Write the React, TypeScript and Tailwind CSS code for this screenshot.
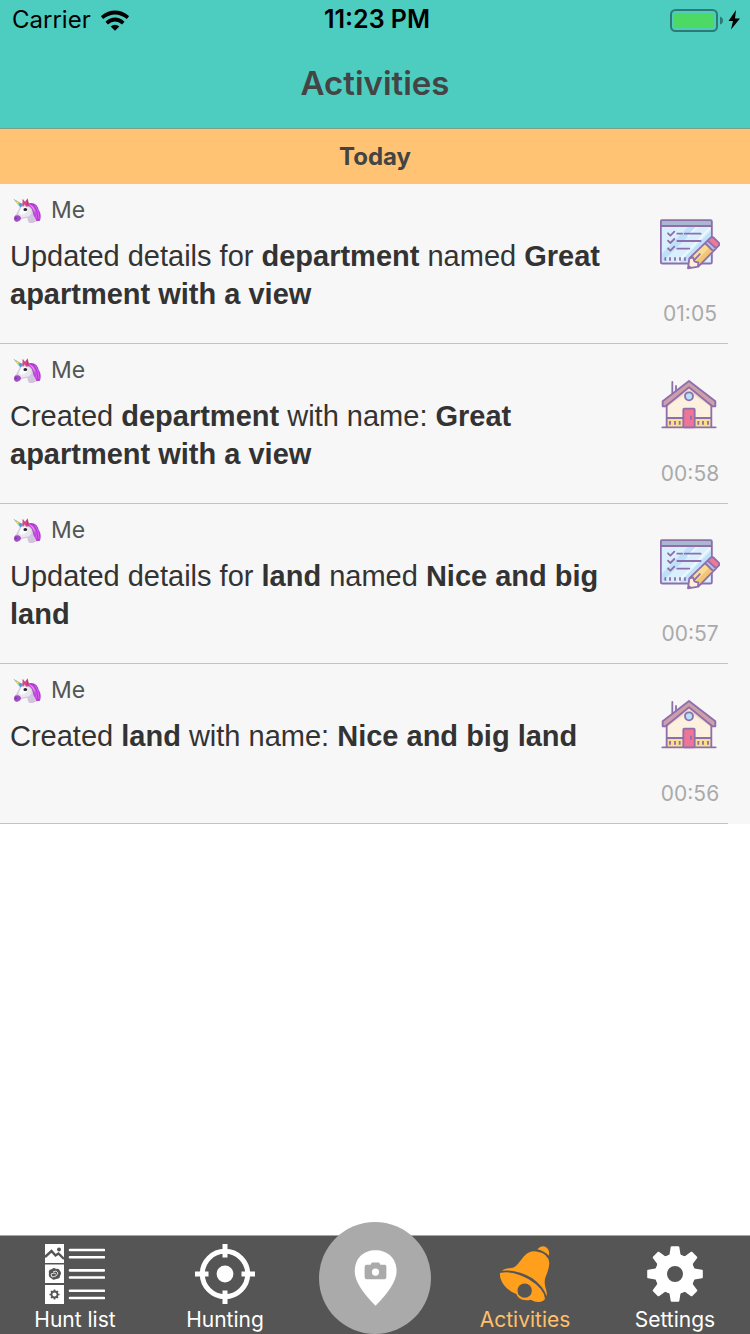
import React from "react";

type Kind = "edit" | "home";

interface Activity {
  id: number;
  kind: Kind;
  time: string;
  text: React.ReactNode;
}

const activities: Activity[] = [
  {
    id: 1,
    kind: "edit",
    time: "01:05",
    text: (
      <>
        Updated details for <b>department</b> named <b>Great apartment with a view</b>
      </>
    ),
  },
  {
    id: 2,
    kind: "home",
    time: "00:58",
    text: (
      <>
        Created <b>department</b> with name: <b>Great apartment with a view</b>
      </>
    ),
  },
  {
    id: 3,
    kind: "edit",
    time: "00:57",
    text: (
      <>
        Updated details for <b>land</b> named <b>Nice and big land</b>
      </>
    ),
  },
  {
    id: 4,
    kind: "home",
    time: "00:56",
    text: (
      <>
        Created <b>land</b> with name: <b>Nice and big land</b>
      </>
    ),
  },
];

function Unicorn() {
  return (
    <svg viewBox="43 36 90 80" className="h-[27px] w-[30px]" aria-hidden="true">
      <path d="M90 55 C106 50 118 62 120 74 C128 86 127 98 124 107 L111 108 L99 88 Z" fill="#b43bd8" />
      <path d="M101 62 Q113 72 114 100 M109 60 Q121 75 121 101" stroke="#d65fe8" strokeWidth="3" fill="none" />
      <path d="M64 63 L74 56 L92 57 Q106 64 109 80 Q108 96 113 107 Q101 117 90 111 Q86 105 87 99 Q75 97 66 103 Q58 111 50 108 Q44 103 47 95 L58 78 Z" fill="#cfc8dc" />
      <path d="M68 65 Q89 59 98 74 Q102 88 89 94 Q73 96 63 99 L58 86 Z" fill="#e9e6f0" />
      <path d="M68 66 Q84 62 87 75 Q84 86 68 89 L61 84 Z" fill="#faf9fc" />
      <path d="M49 92 Q58 87 65 94 Q70 101 62 107 Q54 113 48 107 Q43 100 49 92 Z" fill="#a34bc6" />
      <path d="M90 111 Q94 104 103 108 L113 107 Q105 117 90 111" fill="#dfb7df" />
      <path d="M44 41 L73 57 L65 66 Z" fill="#77c9a7" />
      <path d="M44 41 L56 48 L53 52 Z" fill="#eea0a8" />
      <path d="M56 48 L61 51 L56 57 L52 52 Z" fill="#efd35c" />
      <path d="M65 53 L73 58 L66 66 L60 60 Z" fill="#5199dd" />
      <path d="M71 60 L72 41 L79 50 L87 39 L92 62 L83 65 L78 57 L73 65 Z" fill="#d84583" />
      <path d="M85 59 L87 43 L91 64 Z" fill="#9d4669" />
      <path d="M83 60 Q97 62 101 76 L105 92 L114 105 Q112 78 93 58 Z" fill="#c545da" />
      <ellipse cx="80" cy="73" rx="5.500" ry="4.500" fill="#25202b" />
      <circle cx="52" cy="99" r="2.500" fill="#68358d" />
    </svg>
  );
}

function EditIcon() {
  return (
    <svg viewBox="45 39 180 156" className="h-[52px] w-[60px]" aria-hidden="true">
      <rect x="48" y="46" width="152" height="129" rx="3" fill="#d9effd" />
      <path d="M51 146 L131 64 H160 L51 172 Z M105 172 L197 78 V100 L132 172 Z" fill="#bfe0fa" />
      <path d="M128 95 L158 64 M96 174 L196 68" stroke="#edf8ff" strokeWidth="6" />
      <path d="M48 49 Q48 46 52 46 H196 Q200 46 200 50 V63 H48 Z" fill="#a8b9cf" />
      <rect x="47.500" y="45.500" width="153" height="130" rx="4" fill="none" stroke="#8e6fac" strokeWidth="5.500" />
      <path d="M48 63 H200" stroke="#8e6fac" strokeWidth="5.500" />
      <path d="M69 85 L76 92 L88 80 M69 107 L76 114 L88 102 M69 130 L76 137 L88 125 M97 86 H111 M119 86 H167 M97 108 H167 M97 131 H133" stroke="#8e6fac" strokeWidth="5.500" fill="none" strokeLinecap="round" strokeLinejoin="round" />
      <path d="M61 157 V167 M75 157 V167 M90 157 V167 M105 157 V167 M120 157 V167" stroke="#8e6fac" strokeWidth="5.500" />
      <path d="M129 190 L133 160 L180 114 L208 139 L160 185 Z" fill="#f9dc8f" />
      <path d="M150 172 L194 127 L208 139 L160 185 Z" fill="#f1c477" />
      <path d="M129 190 L133 160 L143 157 L148 169 L160 174 L159 186 Z" fill="#fff0dc" />
      <path d="M180 114 L189 105 L216 131 L208 139 Z" fill="#b9bedf" />
      <path d="M187 107 L197 98 Q201 94 206 98 L221 113 Q225 118 221 122 L212 132 Z" fill="#ed7899" />
      <path d="M129 190 L133 160 L197 98 Q201 94 206 98 L221 113 Q225 118 221 122 L160 185 Z M180 114 L206 140 M188 107 L214 131 M134 160 L144 157 L148 169 L160 173 L159 184 M149 164 L166 146" fill="none" stroke="#8e6fac" strokeWidth="5.500" strokeLinejoin="round" />
      <path d="M129 190 L131 180 L140 187 Z" fill="#8e6fac" />
    </svg>
  );
}

function HouseIcon() {
  return (
    <svg viewBox="45 39 180 156" className="h-[52px] w-[60px]" aria-hidden="true">
      <path d="M65 110 L132 64 L199 110 V186 H65 Z" fill="#fcf0df" />
      <path d="M65 112 L132 65 L199 112 V126 L132 80 L65 126 Z" fill="#f1dcc8" />
      <path d="M65 160 H199 V186 H65 Z" fill="#f8df8b" />
      <path d="M82 51 V84 M93 63 V77" stroke="#8e6fac" strokeWidth="5.500" strokeLinecap="round" />
      <path d="M53 109 L132 48 L211 109 V124 H202 L132 67 L62 124 H53 Z" fill="#cda0a9" stroke="#8e6fac" strokeWidth="5.500" strokeLinejoin="round" />
      <path d="M65 121 V186 M199 121 V186 M65 159 H199 M52 187 H212" stroke="#8e6fac" strokeWidth="5.500" strokeLinecap="round" />
      <path d="M75 168 V179 M90 168 V179 M104 168 V179 M160 168 V179 M174 168 V179 M189 168 V179" stroke="#8e6fac" strokeWidth="5.500" />
      <rect x="115" y="131" width="34" height="56" rx="3" fill="#ef7597" stroke="#8e6fac" strokeWidth="5.500" />
      <path d="M138 154 V163" stroke="#8e6fac" strokeWidth="5" strokeLinecap="round" />
      <circle cx="132" cy="94" r="12" fill="#b6e2fb" stroke="#8e6fac" strokeWidth="5.500" />
    </svg>
  );
}

function HuntListIcon() {
  return (
    <svg viewBox="0 0 60 60" className="size-[60px]" aria-hidden="true">
      <path d="M0 0 H19 V19 H0 Z M0 20.500 H19 V39 H0 Z M0 41 H19 V60 H0 Z" fill="white" />
      <path d="M0 13 L6.500 7 L10.500 11.500 L13.500 9.500 L19 15" fill="none" stroke="#555" strokeWidth="2.400" />
      <circle cx="14" cy="5.500" r="2" fill="#555" />
      <path d="M7 25 Q9 23 11 25 Q14 24 15 27 Q17 29 15 32 Q15 35 11 35 Q8 37 6 34 Q3 33 4 29 Q3 26 7 25 Z" fill="#555" />
      <path d="M8 28 L11 27 L13 29 L11 32 L7 33 L6 30 L9 29 L11 30" fill="none" stroke="white" strokeWidth="0.800" />
      <circle cx="9.500" cy="50.500" r="3" fill="none" stroke="#555" strokeWidth="1.800" />
      <path d="M9.500 45.500 V47 M9.500 54 V55.500 M4.500 50.500 H6 M13 50.500 H14.500 M6 47 L7 48 M12 53 L13 54 M13 47 L12 48 M7 53 L6 54" stroke="#555" strokeWidth="1.600" />
      <path d="M25 6 H59 M25 13.300 H59 M25 26.400 H59 M25 33.500 H59 M25 46.700 H59 M25 54 H59" stroke="white" strokeWidth="2.600" strokeLinecap="round" />
    </svg>
  );
}

function TargetIcon() {
  return (
    <svg viewBox="0 0 60 60" className="size-[60px]" fill="none" stroke="white" strokeWidth="5" aria-hidden="true">
      <circle cx="30" cy="30" r="22.700" />
      <circle cx="30" cy="30" r="8.400" fill="white" stroke="none" />
      <path d="M30 0 V13.500 M30 46.500 V60 M0 30 H13.500 M46.500 30 H60" />
    </svg>
  );
}

function BellIcon() {
  return (
    <svg viewBox="135 57 180 180" className="size-[60px]" fill="#ff9f1c" aria-hidden="true">
      <path d="M262 73 Q273 60 286 65 Q300 72 297 92 Q283 78 262 73 Z" />
      <path d="M156 137 Q163 131 183 129 Q195 128 204 116 L222 94 Q239 75 263 80 Q294 85 298 113 Q298 130 287 155 Q281 169 287 190 Q292 204 290 213 Q279 183 247 160 Q203 132 156 137 Z" />
      <path d="M150 144 Q190 136 235 162 Q282 190 285 221 Q282 230 265 231 Q253 231 242 224 Q220 229 207 219 Q202 215 199 207 Q177 200 161 179 Q148 160 150 144 Z" />
      <circle cx="224" cy="197" r="21.500" fill="#555" />
    </svg>
  );
}

const teeth = [0, 45, 90, 135, 180, 225, 270, 315];

function GearIcon() {
  return (
    <svg viewBox="0 0 60 60" className="size-[60px]" aria-hidden="true">
      <circle cx="30" cy="30" r="14" fill="none" stroke="white" strokeWidth="12" />
      {teeth.map((angle) => (
        <path key={angle} d="M22.500 12 L24.500 10.500 L25.700 3 Q25.900 2.200 26.700 2.200 H33.300 Q34.100 2.200 34.300 3 L35.500 10.500 L37.500 12 Z" transform={`rotate(${angle} 30 30)`} fill="white" />
      ))}
    </svg>
  );
}

function PinIcon() {
  return (
    <svg viewBox="160 119 130 170" className="h-[56px] w-[43px]" aria-hidden="true">
      <path d="M225 288 Q162 225 162 184 C162 144 189 120 225 120 C261 120 289 144 289 184 Q288 225 225 288 Z" fill="white" />
      <path d="M198 164 H210 L214 157 H236 L240 164 H253 Q258 164 258 169 V202 Q258 208 252 208 H198 Q192 208 192 202 V170 Q192 164 198 164 Z" fill="#aaa" />
      <circle cx="225" cy="186" r="11" fill="white" />
    </svg>
  );
}

function StatusBar() {
  return (
    <div className="flex h-10 items-center justify-between pr-2 pl-3 text-black">
      <div className="flex flex-1 items-center gap-[10px] text-2xl">
        <span>Carrier</span>
        <svg viewBox="303 28 84 62" className="h-[21px] w-7" fill="none" stroke="black" strokeWidth="11" aria-hidden="true">
          <path d="M306 50 Q345 20 384 50 M320 67 Q345 45 370 67" />
          <path d="M332 77 Q345 67 358 77 L345 90 Z" fill="black" stroke="none" />
        </svg>
      </div>
      <span className="text-[25px] font-semibold">11:23 PM</span>
      <div className="flex flex-1 justify-end">
        <svg viewBox="0 0 72 24" className="h-6 w-[72px]" aria-hidden="true">
          <rect x="1" y="2" width="46" height="21" rx="4.500" fill="none" stroke="#2d7a72" strokeWidth="2" />
          <rect x="4" y="5" width="40" height="15" rx="1.500" fill="#4cd964" />
          <path d="M50 8.500 Q53 9.500 53 12.500 Q53 15.500 50 16.500 Z" fill="#2d7a72" />
          <path d="M66 2 L58.500 13 H63 L61 21.500 L70 10.500 H65 Z" fill="black" />
        </svg>
      </div>
    </div>
  );
}

const tabs = [
  { label: "Hunt list", icon: <HuntListIcon /> },
  { label: "Hunting", icon: <TargetIcon /> },
  null,
  { label: "Activities", icon: <BellIcon />, active: true },
  { label: "Settings", icon: <GearIcon /> },
];

export default function App() {
  return (
    <div className="flex min-h-screen flex-col bg-white font-['Inter',sans-serif]">
      <header className="border-b border-[#7d9d86] bg-[#4dcdc0]">
        <StatusBar />
        <h1 className="flex h-22 items-center justify-center text-[33px] font-semibold text-[#444]">Activities</h1>
      </header>

      <main className="flex-1">
        <h2 className="flex h-[55px] items-center justify-center bg-[#ffc373] text-2xl font-bold text-[#444]">Today</h2>
        <ul className="bg-[#f7f7f7]">
          {activities.map((item) => (
            <li key={item.id} className="flex h-40">
              <div className="flex flex-1 border-b border-[#c4c4c8]">
                <div className="flex-1 pt-3 pl-[10px]">
                  <div className="flex h-7 items-center gap-2 pl-[3px] text-[23px] text-[#555]">
                    <Unicorn />
                    <span>Me</span>
                  </div>
                  <p className="mt-[13px] font-['Liberation_Sans',sans-serif] text-[29px] leading-[38px] text-[#333]">{item.text}</p>
                </div>
                <div className="flex w-[98px] flex-col items-center pt-[34px]">
                  <div className="-mr-[22px] flex flex-col items-center gap-8">
                    {item.kind === "edit" ? <EditIcon /> : <HouseIcon />}
                    <time className="text-[21px] leading-6 text-[#aaa]">{item.time}</time>
                  </div>
                </div>
              </div>
              <div className="w-[22px]" />
            </li>
          ))}
        </ul>
      </main>

      <nav className="grid grid-cols-5 border-t border-[#a0a8a7] bg-[#555]">
        {tabs.map((tab) =>
          tab ? (
            <button
              key={tab.label}
              type="button"
              aria-current={tab.active ? "page" : undefined}
              className={`flex h-[98px] flex-col items-center gap-1 pt-2 text-[21px] leading-6 ${tab.active ? "text-[#ffc06c]" : "text-white"}`}
            >
              {tab.icon}
              <span>{tab.label}</span>
            </button>
          ) : (
            <div key="add" className="relative h-[98px]">
              <button
                type="button"
                aria-label="Add photo location"
                className="absolute bottom-0 left-1/2 flex size-28 -translate-x-1/2 items-center justify-center rounded-full bg-[#aaa]"
              >
                <PinIcon />
              </button>
            </div>
          ),
        )}
      </nav>
    </div>
  );
}
